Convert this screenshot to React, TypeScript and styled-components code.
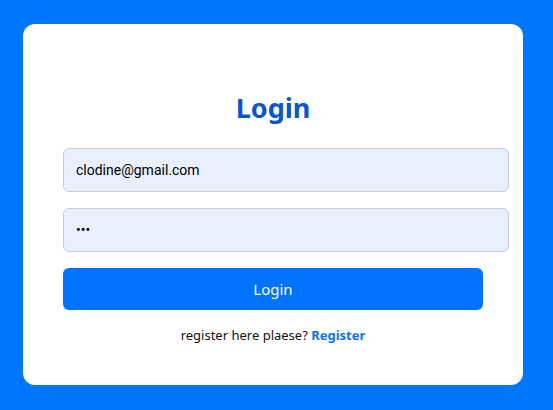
import React from "react";
import styled, { createGlobalStyle } from "styled-components";

const GlobalStyle = createGlobalStyle`
  html, body {
    margin: 0;
    padding: 0;
    background: #0077ff;
  }
  body {
    font-family: "Noto Sans", "Open Sans", sans-serif;
  }
`;

const Page = styled.div`
  height: 410px;
  display: flex;
  align-items: flex-start;
  padding: 24px 0 0 23px;
  box-sizing: border-box;
`;

const Card = styled.form`
  width: 500px;
  padding: 40px;
  box-sizing: border-box;
  background: #ffffff;
  border-radius: 12px;
  display: flex;
  flex-direction: column;
`;

const Title = styled.h2`
  margin: 25px 0 21px;
  font-size: 27px;
  line-height: 38px;
  font-weight: 700;
  color: #0a56cc;
  text-align: center;
`;

const Input = styled.input`
  width: 100%;
  box-sizing: content-box;
  height: 42px;
  padding: 0 12px;
  margin: 0 0 16px;
  border: 1px solid #c9ccd1;
  border-radius: 6px;
  background: #e8f0fe;
  font-family: Roboto, "Liberation Sans", sans-serif;
  font-size: 14px;
  color: #000000;
  outline: none;
`;

const Button = styled.button`
  width: 100%;
  height: 42px;
  border: none;
  border-radius: 6px;
  background: #0073ff;
  color: #ffffff;
  font-family: "Noto Sans", "Open Sans", sans-serif;
  font-size: 15px;
  cursor: pointer;
`;

const Footer = styled.p`
  margin: 16px 0 0;
  font-size: 13px;
  line-height: 19px;
  color: #111111;
  text-align: center;
`;

const RegisterLink = styled.a`
  color: #0a75f0;
  font-weight: 700;
  text-decoration: none;
`;

export default function App() {
  return (
    <>
      <GlobalStyle />
      <Page>
        <Card onSubmit={(e) => e.preventDefault()}>
          <Title>Login</Title>
          <Input type="email" defaultValue="clodine@gmail.com" />
          <Input type="password" defaultValue="123" />
          <Button type="submit">Login</Button>
          <Footer>
            register here plaese? <RegisterLink href="#">Register</RegisterLink>
          </Footer>
        </Card>
      </Page>
    </>
  );
}
